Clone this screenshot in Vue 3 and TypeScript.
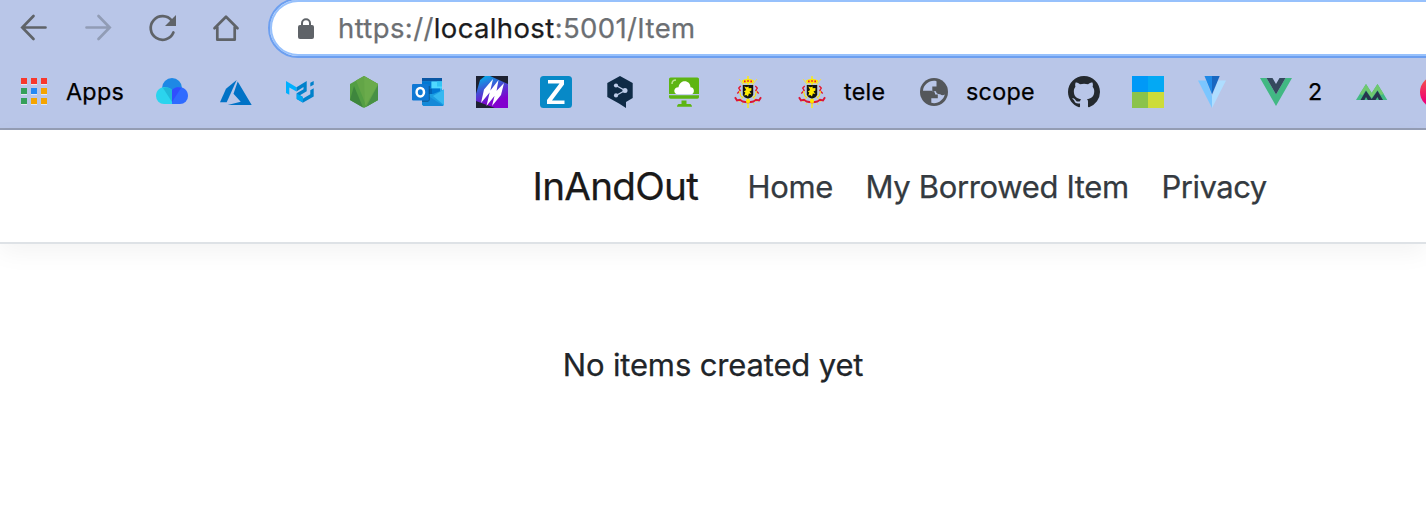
<script setup lang="ts">
interface Bookmark {
  id: string
  label?: string
  width?: number
}

const bookmarks: Bookmark[] = [
  { id: 'apps', label: 'Apps', width: 58 },
  { id: 'cloud' },
  { id: 'azure' },
  { id: 'mui' },
  { id: 'node' },
  { id: 'outlook' },
  { id: 'slashes' },
  { id: 'zed' },
  { id: 'deepl' },
  { id: 'monitor' },
  { id: 'crest' },
  { id: 'crest', label: 'tele', width: 42 },
  { id: 'globe', label: 'scope', width: 70 },
  { id: 'github' },
  { id: 'tiles' },
  { id: 'vuetify' },
  { id: 'vue', label: '2', width: 16 },
  { id: 'peaks' },
  { id: 'red' },
]

const appColors: string[] = [
  '#f8382c', '#f8382c', '#f8382c',
  '#35a05a', '#2489f5', '#f5a400',
  '#35a05a', '#f5a400', '#f5a400',
]

const links: { text: string; cls: string }[] = [
  { text: 'Home', cls: 'home' },
  { text: 'My Borrowed Item', cls: 'borrowed' },
  { text: 'Privacy', cls: 'privacy' },
]
</script>

<template>
  <div class="window">
    <div class="chrome">
      <div class="toolbar">
        <div class="controls">
          <svg class="ico" viewBox="0 0 32 32"><path d="M27.500 15.500H4.500M15.500 4 4.300 15.500 15.500 27" fill="none" stroke="#5f6368" stroke-width="2.700" stroke-linecap="round" /></svg>
          <svg class="ico" viewBox="0 0 32 32"><path d="M4.500 15.500h23M16.500 4 27.700 15.500 16.500 27" fill="none" stroke="#919cb5" stroke-width="2.700" stroke-linecap="round" /></svg>
          <svg class="ico" viewBox="0 0 32 32">
            <path d="M25.800 8.700A11.800 11.800 0 1 0 27.400 20.500" fill="none" stroke="#5f6368" stroke-width="2.700" stroke-linecap="round" />
            <path d="M30 3v11H19z" fill="#5f6368" />
          </svg>
          <svg class="ico" viewBox="0 0 32 32"><path d="M4.500 16.200 16 4.700 27.500 16.200M7.300 15v12.700h17.400V15" fill="none" stroke="#5f6368" stroke-width="2.700" stroke-linecap="round" stroke-linejoin="round" /></svg>
        </div>
        <div class="address">
          <svg class="lock" viewBox="0 0 16 22"><path d="M4 9V5.200a4 4 0 0 1 8 0V9" fill="none" stroke="#5f6368" stroke-width="2" /><rect y="7" width="16" height="14" rx="2" fill="#5f6368" /></svg>
          <div class="url">https://<span class="host">localhost</span>:5001/Item</div>
        </div>
      </div>

      <div class="bookmarks">
        <div v-for="(b, i) in bookmarks" :key="i" class="bookmark">
          <svg class="fav" viewBox="0 0 32 32">
            <g v-if="b.id === 'apps'">
              <g v-for="(c, n) in appColors" :key="n">
                <rect :x="3 + (n % 3) * 10" :y="3 + Math.floor(n / 3) * 10" width="6" height="6" fill="#e3e7f1" />
                <rect :x="3 + (n % 3) * 10" :y="2 + Math.floor(n / 3) * 10" width="6" height="6" :fill="c" />
              </g>
            </g>
            <g v-else-if="b.id === 'cloud'">
              <circle cx="16" cy="12" r="10" fill="#1e88e5" />
              <path d="M16 14v14H8a8 8 0 0 1-8-8c0-8 9-12 16-6z" fill="#2bd4ee" />
              <path d="M16 14v14h8a8 8 0 0 0 8-8c0-8-9-12-16-6z" fill="#2f6bff" />
              <path d="M7 12c4-2 7 0 9 2v12z" fill="#20b9d9" />
              <path d="M25 12c-4-2-7 0-9 2v12z" fill="#304ffe" />
            </g>
            <g v-else-if="b.id === 'azure'" fill="#0072c6">
              <path d="M16.700 4 6 12.700 0 26.300h6.700z" />
              <path d="M17.700 5.500 31.700 29H7.700l13-3.300-7.200-8z" />
            </g>
            <g v-else-if="b.id === 'mui'">
              <path d="M2 5 12.500 11.200v4.400L5.300 11.500v7.200L2 17z" fill="#00b0ff" />
              <path d="M12.500 11.200 22.700 5v10.200L16 19.200l2.700 1.600v5.600l-6-3.500v-5.600l6.800-4v-2.200l-7 4.300z" fill="#0081cb" />
              <path d="m18.700 22.700 7.600-4.400v-4l3.400-2v8.200l-11 6.300z" fill="#0081cb" />
              <path d="m26.300 6.800 3.400-1.900v3.800l-3.400 1.900z" fill="#0081cb" />
              <path d="m12.700 17.500 6 3.500v5.400l-6-3.500z" fill="#00a6f3" />
            </g>
            <g v-else-if="b.id === 'node'">
              <path d="M16 0 30 8v16l-14 8L2 24V8z" fill="#539e43" />
              <path d="M16 0 30 8v16L18.500 30.500 8 4.500z" fill="#63a547" />
              <path d="m16 0 14 8-13 22z" fill="#6aab4b" />
              <path d="m6 10 9 21.500L2 24z" fill="#3e863d" />
              <path d="m30 9-12 22 12-7z" fill="#489044" />
            </g>
            <g v-else-if="b.id === 'outlook'">
              <path d="M10 2h20v16H10z" fill="#28a8ea" />
              <path d="M10 2h20v3.500H10z" fill="#0a57a4" />
              <path d="M10 5.500h9.500v7H10z" fill="#0078d4" />
              <path d="M19.500 5.500H30v7H19.500z" fill="#50d9ff" />
              <path d="M25 5.500h5v5h-5z" fill="#32c5f5" />
              <path d="M10 12.500h10V20H10z" fill="#0364b8" />
              <path d="M20 12.500h8V18h-8z" fill="#0078d4" />
              <path d="M10 18h11l11-4.500v15L30.500 30h-19L10 28.500z" fill="#1b9de2" />
              <path d="m21 20 11-6.500V29z" fill="#35b8f1" />
              <path d="m10 16 22 14H11.500L10 28.500z" fill="#1489d8" />
              <path d="M10 10h8v14l-2 2h-6z" fill="#0a4e86" opacity=".6" />
              <rect y="8" width="16.700" height="16.500" rx="1.200" fill="#0f78d4" />
              <ellipse cx="8.300" cy="16.200" rx="3.700" ry="4.300" fill="none" stroke="#fff" stroke-width="2.500" />
            </g>
            <g v-else-if="b.id === 'slashes'">
              <defs><linearGradient id="violet" x1="0" y1="0" x2=".4" y2="1"><stop offset=".1" stop-color="#08a8e8" /><stop offset=".5" stop-color="#4649d3" /><stop offset=".9" stop-color="#8200ce" /></linearGradient></defs>
              <path d="M0 0h32v32H0z" fill="url(#violet)" />
              <path d="M14 0h18v8zM0 25v7h19zM0 0h9L4 4 0 18z" fill="#1d2131" />
              <path d="M17 3 8 13.500 5 27l9-11zM22.500 4 14 15l-3.500 15L20 18zM28 7l-8.500 9L16 30l9-11z" fill="#fff" />
            </g>
            <g v-else-if="b.id === 'zed'">
              <rect width="32" height="32" rx="3.500" fill="#0789c7" />
              <path d="M8 4h16v4.500L12 24.500h12.500V28H7v-4L19.500 7.500H8z" fill="#fff" />
            </g>
            <g v-else-if="b.id === 'deepl'">
              <path d="M16 0 28.700 7v15L22 26v6l-7-4.500L3.300 21V7z" fill="#0f2b46" />
              <path d="m12 9.500 9 5-9 5" fill="none" stroke="#bdcce8" stroke-width="1.400" />
              <g fill="#bdcce8"><circle cx="12" cy="9.500" r="2.100" /><circle cx="21" cy="14.400" r="2.500" /><circle cx="12" cy="19.400" r="2.100" /></g>
            </g>
            <g v-else-if="b.id === 'monitor'">
              <path d="M1 3q0-1.600 1.600-1.600h26.800Q31 1.400 31 3v15H1z" fill="#5db512" />
              <path d="M1 19.300h30V21q0 1.700-1.600 1.700H2.600Q1 22.700 1 21z" fill="#5db512" />
              <path d="M13.500 24.500h5V28h4q1.500 1 1.500 2.700H9q0-2 1.500-2.700h3z" fill="#5db512" />
              <path d="M10 18.300c-5 0-5-7 .5-7 1.500-8.500 12-7.500 12 0 4.500 0 4.500 7 .5 7z" fill="#fff" />
              <path d="M4 8c0-3 2-4 4-4" fill="none" stroke="#bce293" stroke-width="1.500" />
            </g>
            <g v-else-if="b.id === 'crest'">
              <path d="m7 3 18 23M25 3 7 26" stroke="#f0e04a" stroke-width="1" />
              <path d="M16 0v32" stroke="#fff000" stroke-width="1.300" />
              <path d="M11 7.200 9.800 4.500q3-1.800 6.200-1.800t6.200 1.800L21 7.200z" fill="#ffe600" />
              <path d="M12 4.600h1.600v1.600H12zM15.200 4.200h1.600v1.600h-1.600zM18.400 4.600H20v1.600h-1.600z" fill="#ed1730" />
              <path d="m8.700 10-2 2 1.500 2.500-2.900 3M23.300 10l2 2-1.500 2.500 2.900 3" fill="none" stroke="#e4162b" stroke-width="1.300" />
              <path d="m7.500 15 1.200 5 2.300 2M24.500 15l-1.200 5-2.300 2" stroke="#f6df12" fill="none" stroke-width="1.100" />
              <path d="M10.800 9h10.400v9.800q-1 3-5.200 3.800-4.200-.8-5.200-3.800z" fill="#111" />
              <path d="m12.300 10.500 2.500.8 1.800-.8v1.700l2.800-.2v2.600l-1.900.9 1.900 2.400-2.500-.5-.9 3-1.700-1.400-2 .6 1-3.100-1.500-1 2.300-1.500z" fill="#ffea00" />
              <path d="m3 21.200 2 3.300 3-.7 2.500 1.700q5.500 1.500 11 0l2.500-1.700 3 .7 2-3.300" fill="none" stroke="#dc1634" stroke-width="1.900" />
              <path d="M14.500 23.500h3v3h-3zM9.500 28h1.600M21 28h1.600" fill="#ffe900" stroke="#ffe900" stroke-width=".8" />
            </g>
            <g v-else-if="b.id === 'globe'">
              <circle cx="16" cy="16" r="14" fill="#54575b" />
              <path d="M18.500 5.200C12 3.500 5.400 8.500 5 14.800h8.500c2.200 0 3.700 1.500 3.700 3.700h2.600v3.700h-6.500v4.600c6.200 1.600 12.200-2.400 13.500-8.200-1.500.9-3.400.8-4.600-.4-2.300.2-4.200-1.200-4.200-3h-3.700v-4.600h4.200V7.500c0-1 .2-1.800 0-2.300z" fill="#b9c6e8" />
            </g>
            <path v-else-if="b.id === 'github'" transform="scale(2)" fill="#24292e" d="M8 0C3.580 0 0 3.580 0 8c0 3.540 2.290 6.530 5.470 7.590.4.070.55-.17.55-.38 0-.19-.01-.82-.01-1.490-2.010.37-2.530-.49-2.690-.94-.09-.23-.48-.94-.82-1.130-.28-.15-.68-.52-.01-.53.63-.01 1.080.58 1.230.82.72 1.210 1.870.87 2.330.66.07-.52.28-.87.51-1.070-1.780-.2-3.640-.89-3.640-3.950 0-.87.31-1.590.82-2.150-.08-.2-.36-1.020.08-2.120 0 0 .67-.21 2.200.82.64-.18 1.320-.27 2-.27s1.360.09 2 .27c1.530-1.040 2.200-.82 2.200-.82.44 1.100.16 1.920.08 2.120.51.56.82 1.270.82 2.150 0 3.070-1.870 3.750-3.650 3.950.29.25.54.73.54 1.480 0 1.070-.01 1.930-.01 2.200 0 .21.15.46.55.38A8.010 8.010 0 0 0 16 8c0-4.420-3.580-8-8-8z" />
            <g v-else-if="b.id === 'tiles'">
              <path d="M0 0h16v16H0z" fill="#0099f7" /><path d="M16 0h16v16H16z" fill="#03a9f4" />
              <path d="M0 16h16v16H0z" fill="#8bc34a" /><path d="M16 16h16v16H16z" fill="#cddc39" />
            </g>
            <g v-else-if="b.id === 'vuetify'">
              <path d="M2 4.500h8L16 20v12z" fill="#7bc6ff" /><path d="M30 4.500h-8L16 20v12z" fill="#aeddff" />
              <path d="M8.500 0H16v18.500z" fill="#1e88e5" /><path d="M23.700 0H16v18.500z" fill="#1867c0" />
            </g>
            <g v-else-if="b.id === 'vue'">
              <path d="M0 2h6.500L16 18.500 25.500 2H32L16 30z" fill="#41b883" />
              <path d="M6.500 2h6L16 8l3.500-6h6L16 18.500z" fill="#35495e" />
            </g>
            <g v-else-if="b.id === 'peaks'">
              <path d="M0 24 10 8l5.700 9L21.500 8 31.300 24z" fill="#42b983" />
              <path d="M3.700 18 10 8l5.700 9L21.500 8l6.200 10-2.700 1-3.500-5-5.800 8L10 14l-3.500 5z" fill="#70c96f" />
              <path d="m4.500 24 5.500-9.300 5.700 8.300 5.800-8.300L27 24h-4l-1.500-3-2 3h-7.700L10 21l-1.500 3z" fill="#26364d" />
            </g>
            <g v-else>
              <defs><linearGradient id="warm" x2="0" y2="1"><stop stop-color="#f35b43" /><stop offset=".8" stop-color="#f00078" /></linearGradient></defs>
              <circle cx="16" cy="16" r="16" fill="url(#warm)" />
            </g>
          </svg>
          <span v-if="b.label" class="label" :style="{ width: b.width + 'px' }">{{ b.label }}</span>
        </div>
      </div>
    </div>

    <header class="navbar">
      <a class="brand">InAndOut</a>
      <nav class="links">
        <a v-for="l in links" :key="l.text" :class="l.cls">{{ l.text }}</a>
      </nav>
    </header>

    <main class="content">
      <p>No items created yet</p>
    </main>
  </div>
</template>

<style>
body {
  margin: 0;
}
</style>

<style scoped>
.window {
  width: 1426px;
  height: 516px;
  overflow: hidden;
  background: #fff;
  font-family: Inter, "Liberation Sans", sans-serif;
  white-space: nowrap;
  -webkit-text-stroke: 0.25px currentColor;
}
.chrome {
  box-sizing: border-box;
  height: 130px;
  overflow: hidden;
  background: #b9c6e8;
  border-bottom: 2px solid #959eb5;
}
.toolbar {
  display: flex;
  height: 60px;
}
.controls {
  display: flex;
  gap: 32px;
  flex: none;
  width: 250px;
  padding: 12px 0 0 18px;
}
.ico,
.fav {
  flex: none;
  width: 32px;
  height: 32px;
}
.address {
  box-sizing: border-box;
  display: flex;
  align-items: center;
  flex: none;
  width: 1220px;
  height: 60px;
  margin-top: -2px;
  padding-left: 26px;
  border: 2px solid #6c9ff0;
  border-radius: 30px;
  background: #fff;
  box-shadow: inset 0 0 0 2px #97c1fc;
}
.lock {
  width: 16px;
  height: 22px;
  margin: 2px 24px 0 2px;
}
.url {
  font-size: 27.500px;
  color: #6c6f73;
  letter-spacing: 0.38px;
}
.host {
  color: #1b1c20;
}
.bookmarks {
  display: flex;
  gap: 32px;
  padding: 16px 0 0 18px;
}
.bookmark {
  display: flex;
  align-items: center;
  flex: none;
  gap: 16px;
}
.label {
  font-size: 23.300px;
  line-height: 32px;
  color: #000;
  letter-spacing: 0.3px;
}
.navbar {
  box-sizing: border-box;
  display: flex;
  align-items: center;
  height: 114px;
  padding-left: 532.500px;
  background: #fff;
  border-bottom: 2px solid #dee2e6;
  box-shadow: 0 8px 24px rgba(0, 0, 0, 0.05);
}
.brand {
  width: 215px;
  font-size: 38.700px;
  color: #1a1a1a;
  letter-spacing: -0.75px;
}
.links {
  display: flex;
  gap: 32px;
  font-size: 31px;
  color: #343a40;
  letter-spacing: -0.35px;
}
.home { width: 86px; }
.borrowed { width: 264px; }
.privacy { letter-spacing: -0.5px; }
.content {
  padding-top: 97px;
  text-align: center;
  font-size: 31px;
  line-height: 48px;
  color: #212529;
  letter-spacing: -0.15px;
}
.content p {
  margin: 0;
}
</style>
